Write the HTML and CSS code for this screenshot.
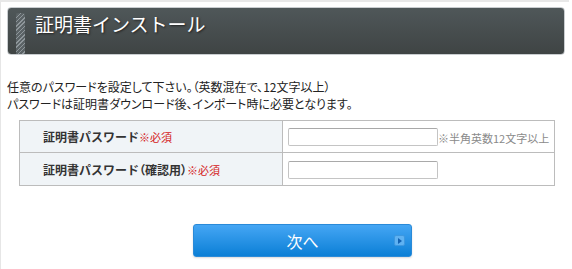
FILE: index.html
```html
<!DOCTYPE html>
<html lang="ja">
<head>
  <meta charset="UTF-8">
  <title>証明書インストール</title>
  <link rel="stylesheet" href="styles.css">
</head>
<body>

<div class="frame">
  <h1 class="pageTitle">
    <span class="stripe"></span>
    <span class="titleText">証明書インストール</span>
  </h1>

  <p class="lead">
    任意のパスワードを設定して下さい。（英数混在で、12文字以上）<br>
    パスワードは証明書ダウンロード後、インポート時に必要となります。
  </p>

  <table class="formTable">
    <tr>
      <th>証明書パスワード<span class="req">※必須</span></th>
      <td><input type="password" class="field"><span class="note">※半角英数12文字以上</span></td>
    </tr>
    <tr>
      <th>証明書パスワード<span class="paren">（確認用）</span><span class="req">※必須</span></th>
      <td><input type="password" class="field"></td>
    </tr>
  </table>

  <div class="actions">
    <button class="nextBtn" type="button">
      次へ
      <span class="arrow"></span>
    </button>
  </div>
</div>

</body>
</html>
```

FILE: styles.css
```css
*, *:before, *:after {
  box-sizing: border-box;
}

body {
  margin: 0;
  padding: 0;
  background: #fff;
  font-family: "Noto Sans CJK JP", "Noto Sans", sans-serif;
  color: #333;
}

.frame {
  width: 569px;
  height: 269px;
  border-left: 1px solid #e6e6e6;
  border-top: 2px solid #e8e8e8;
  padding: 5px 0 0 6px;
}

.pageTitle {
  display: flex;
  align-items: stretch;
  width: 558px;
  height: 48px;
  margin: 0;
  border: 1px solid #c9cdd0;
  border-radius: 4px;
  background: linear-gradient(to bottom, #4f5759, #3f4444);
}

.stripe {
  width: 9px;
  margin: 5px 0 0 8px;
  border-radius: 3px 3px 0 0;
  background: repeating-linear-gradient(135deg, #8f979b 0 1px, #5b6366 1px 3px);
}

.titleText {
  padding: 2px 0 0 10px;
  font-size: 19px;
  font-weight: normal;
  line-height: 28px;
  color: #fff;
  text-shadow: 1px 1px 2px #222;
}

.lead {
  margin: 23px 0 0 0;
  font-size: 12px;
  line-height: 17px;
  font-feature-settings: "palt" 1;
  color: #222;
}

.formTable {
  margin: 8px 0 0 12px;
  width: 536px;
  border-collapse: collapse;
  font-size: 12px;
}

.formTable th,
.formTable td {
  border: 1px solid #bcbcbc;
  height: 32px;
  padding: 0;
}

.formTable th {
  width: 263px;
  padding-left: 23px;
  text-align: left;
  background: #f0f4f7;
  color: #333;
  font-weight: bold;
}

.formTable tr + tr th,
.formTable tr + tr td {
  height: 33px;
}

.paren {
  font-feature-settings: "palt" 1;
}

.req {
  font-size: 11px;
  font-weight: normal;
  color: #d42020;
  font-feature-settings: "palt" 1;
}

.formTable td {
  padding-left: 5px;
}

.field {
  width: 150px;
  height: 18px;
  margin: 0;
  padding: 0 3px;
  border: 1px solid #c4c4c4;
  border-top-color: #a9a9a9;
  border-radius: 2px;
  vertical-align: middle;
}

.note {
  font-size: 11px;
  color: #8a8a8a;
  vertical-align: middle;
  font-feature-settings: "palt" 1;
}

.actions {
  padding: 38px 0 0 186px;
}

.nextBtn {
  position: relative;
  width: 219px;
  height: 33px;
  border: 1px solid #2a8ad8;
  border-radius: 3px;
  background: linear-gradient(to bottom, #45a6f4, #0b7fd6);
  box-shadow: 0 1px 2px rgba(0, 0, 0, 0.15);
  color: #fff;
  font-family: "Noto Sans CJK JP", sans-serif;
  font-size: 16px;
  padding: 0;
  cursor: pointer;
}

.arrow {
  position: absolute;
  right: 6px;
  top: 10px;
  width: 11px;
  height: 11px;
  border-radius: 2px;
  background: #5fb2f2;
  border: 1px solid #3d98e0;
}

.arrow:after {
  content: "";
  position: absolute;
  left: 3px;
  top: 2px;
  border-left: 4px solid #1262b4;
  border-top: 3px solid transparent;
  border-bottom: 3px solid transparent;
}
```
